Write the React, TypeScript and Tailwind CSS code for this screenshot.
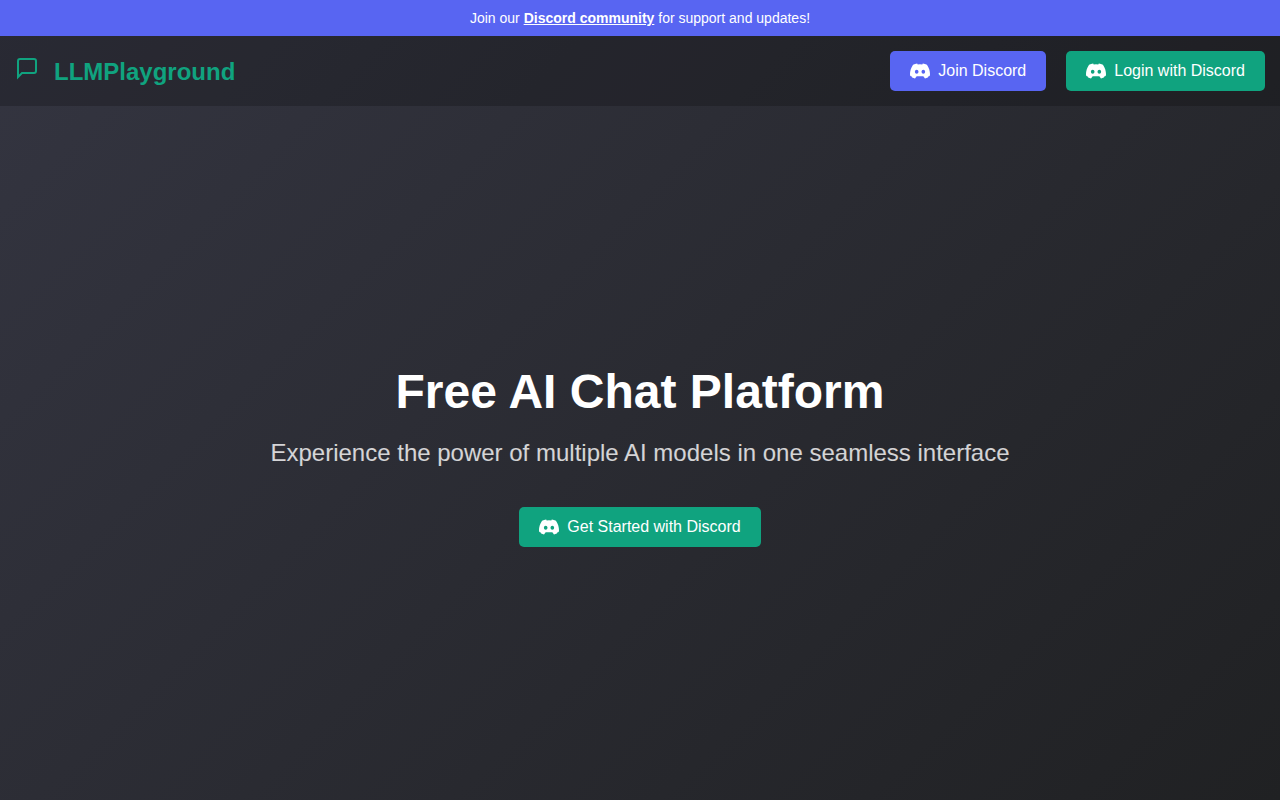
type DiscordButtonProps = {
  label: string;
  tone: "blurple" | "green";
};

function DiscordIcon() {
  return (
    <svg viewBox="0 0 24 24" className="size-5" fill="currentColor" aria-hidden="true">
      <path
        fillRule="evenodd"
        d="M20.32 4.37a19.8 19.8 0 0 0-4.89-1.52c-.25.4-.5.86-.69 1.25a18.3 18.3 0 0 0-5.48 0c-.19-.39-.44-.85-.69-1.25a19.8 19.8 0 0 0-4.89 1.52C.53 9.05-.32 13.58.1 17.4c.6.6 1.3 1 2.1 1.3-.1.5.1.9.5 1.2 1 .5 2.1.9 3.3 1.1.6-.7 1-1.4 1.3-2.2.8-.3 1.6-.4 2.3-.4h4.8c.7 0 1.5.1 2.3.4.3.8.7 1.5 1.3 2.2 1.2-.2 2.3-.6 3.3-1.1.4-.3.6-.7.5-1.2.8-.3 1.5-.7 2.1-1.3.42-3.82-.43-8.35-3.58-13.03ZM8.02 15.33c-1.18 0-2.16-1.08-2.16-2.42s.96-2.42 2.16-2.42c1.21 0 2.18 1.1 2.16 2.42 0 1.34-.96 2.42-2.16 2.42Zm7.97 0c-1.18 0-2.15-1.08-2.15-2.42s.95-2.42 2.15-2.42c1.21 0 2.18 1.1 2.16 2.42 0 1.34-.95 2.42-2.16 2.42Z"
      />
    </svg>
  );
}

function DiscordButton({ label, tone }: DiscordButtonProps) {
  const color =
    tone === "blurple"
      ? "bg-[#5865f2] hover:bg-[#4752c4]"
      : "bg-[#10a37f] hover:bg-[#0d8c6d]";
  return (
    <button
      type="button"
      className={`flex h-10 cursor-pointer items-center gap-2 rounded-[5px] px-5 text-base text-white ${color}`}
    >
      <DiscordIcon />
      {label}
    </button>
  );
}

function ChatIcon() {
  return (
    <svg
      viewBox="0 0 24 24"
      className="size-6"
      fill="none"
      stroke="currentColor"
      strokeWidth="2"
      aria-hidden="true"
    >
      <path d="M21 15a2 2 0 0 1-2 2H7l-4 4V5a2 2 0 0 1 2-2h14a2 2 0 0 1 2 2z" />
    </svg>
  );
}

export default function App() {
  return (
    <div className="flex min-h-screen flex-col bg-linear-[135deg,#343541,#202123] font-['Liberation_Sans',Arial,sans-serif] text-white">
      <div className="bg-[#5865f2] px-4 py-2 text-center text-sm">
        Join our{" "}
        <a href="#discord" className="font-bold underline">
          Discord community
        </a>{" "}
        for support and updates!
      </div>

      <header className="flex items-center justify-between bg-black/20 p-[15px]">
        <a
          href="#home"
          className="flex items-start gap-[15px] pt-0.5 text-2xl font-bold text-[#10a37f]"
        >
          <ChatIcon />
          LLMPlayground
        </a>
        <nav className="flex items-center gap-5">
          <DiscordButton label="Join Discord" tone="blurple" />
          <DiscordButton label="Login with Discord" tone="green" />
        </nav>
      </header>

      <main className="flex flex-1 flex-col items-center justify-center px-5 text-center">
        <h1 className="text-5xl leading-[66px] font-bold">Free AI Chat Platform</h1>
        <p className="mt-2.5 mb-9 text-2xl leading-9 text-white/80">
          Experience the power of multiple AI models in one seamless interface
        </p>
        <DiscordButton label="Get Started with Discord" tone="green" />
      </main>
    </div>
  );
}
